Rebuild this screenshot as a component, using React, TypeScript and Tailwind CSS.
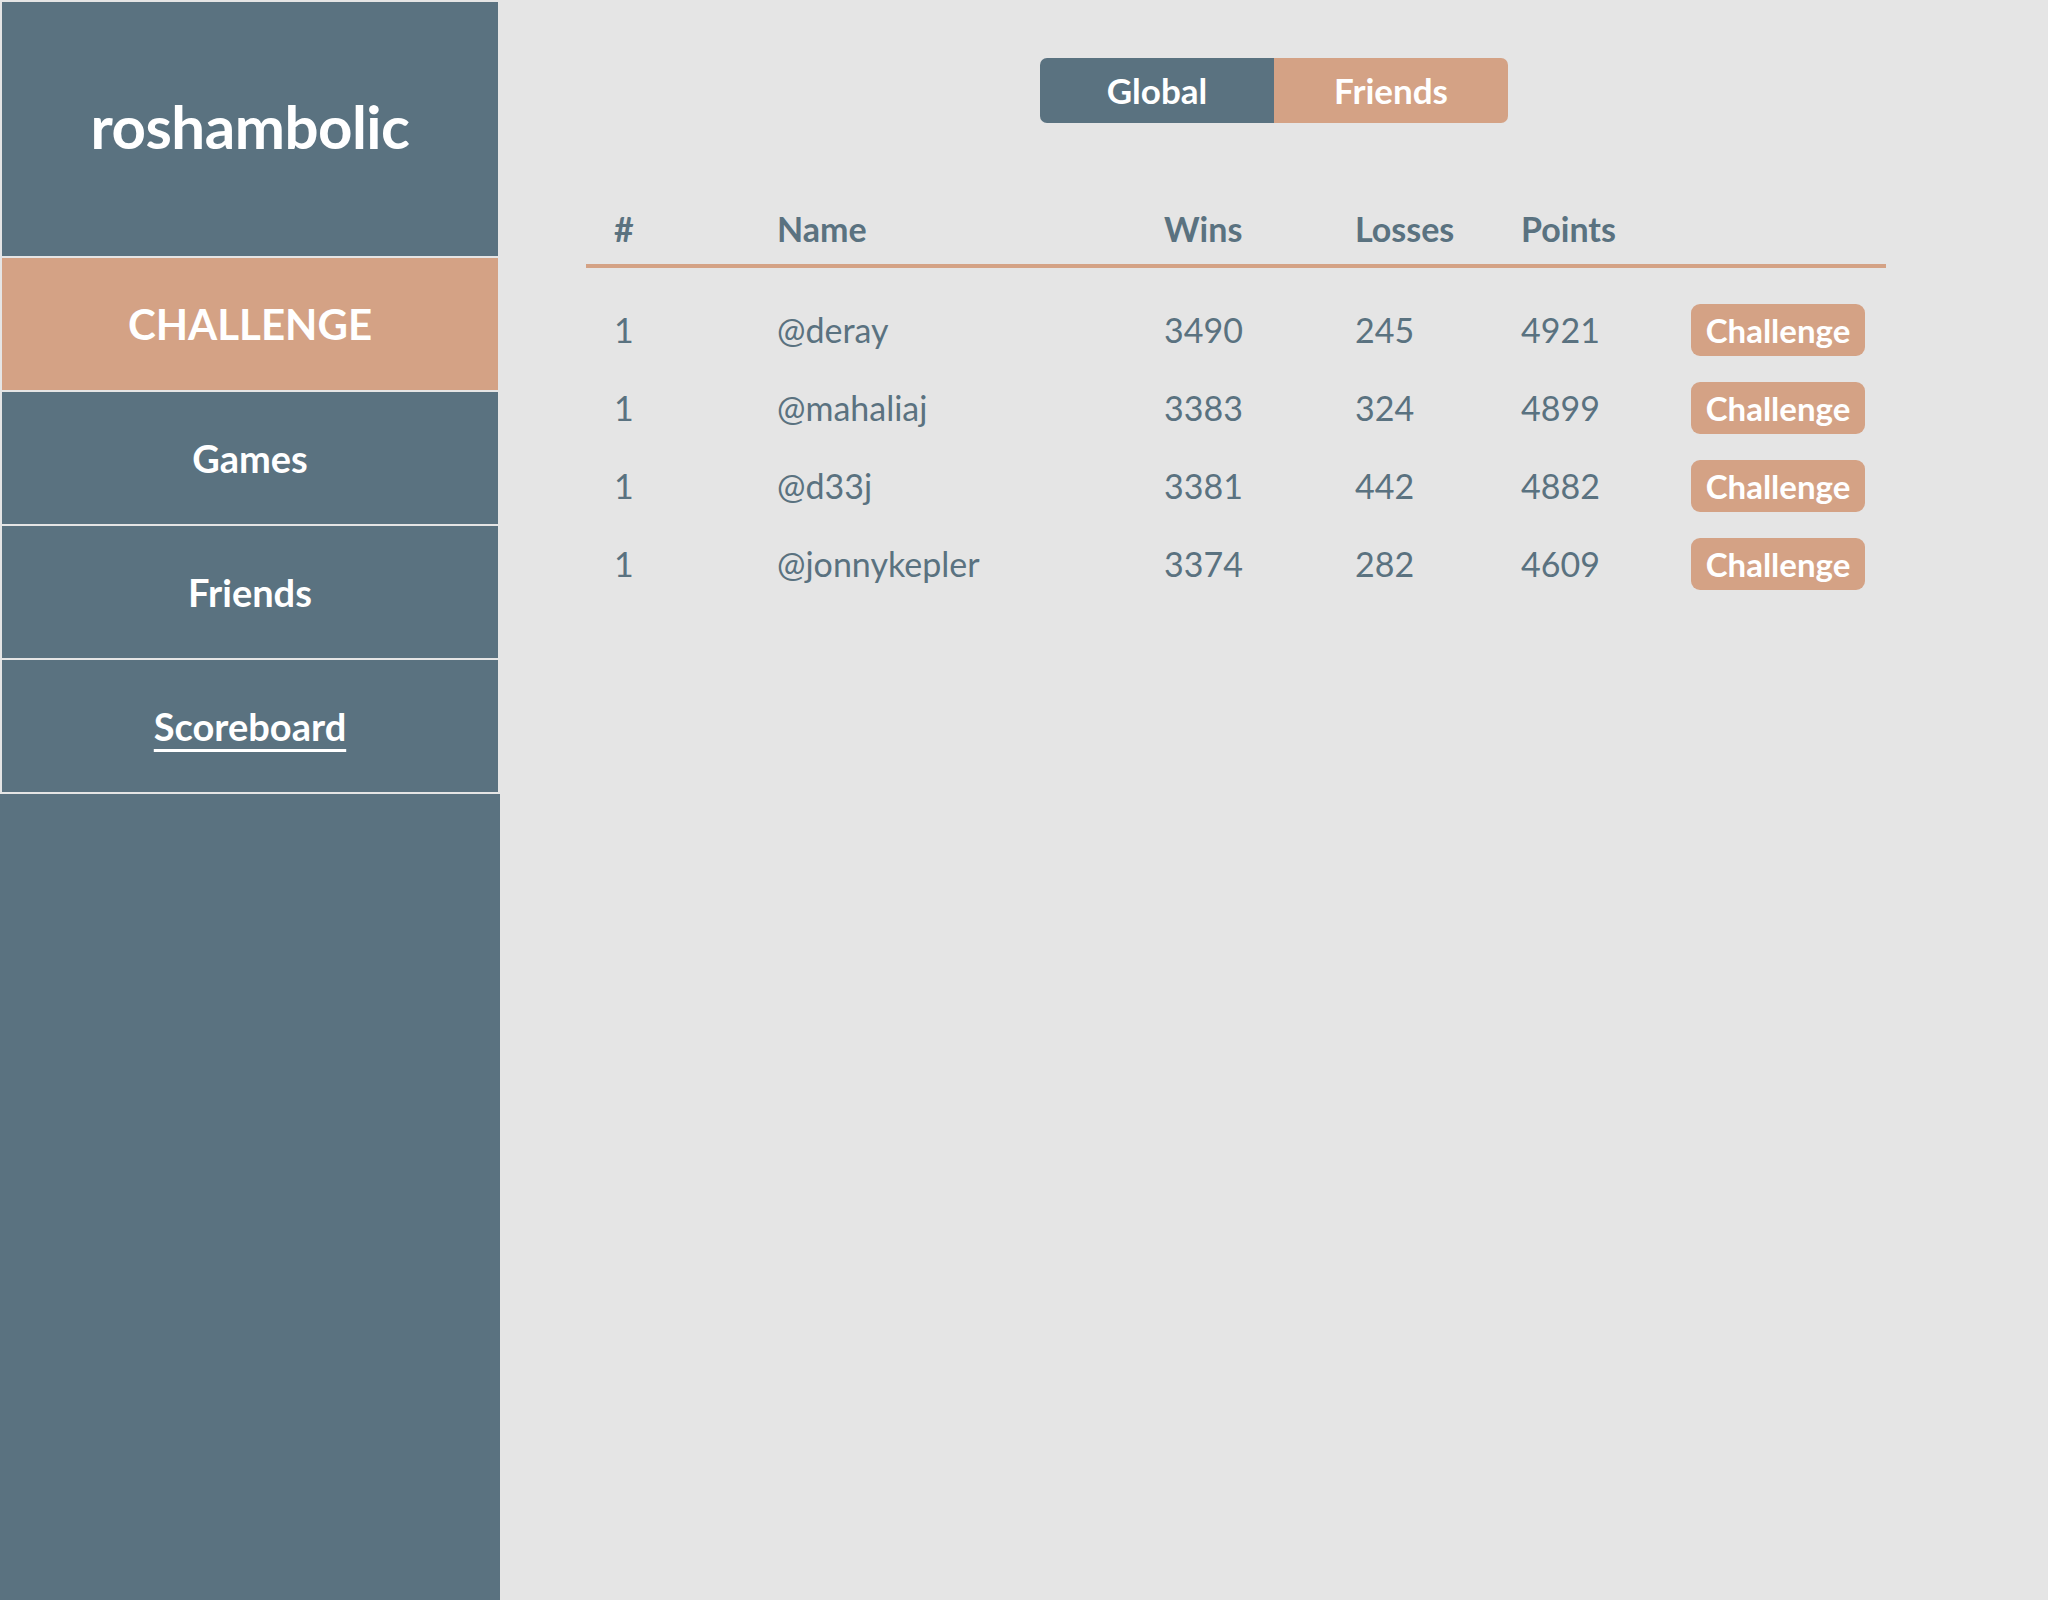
import React from "react";

const rows = [
  { rank: 1, name: "@deray", wins: 3490, losses: 245, points: 4921 },
  { rank: 1, name: "@mahaliaj", wins: 3383, losses: 324, points: 4899 },
  { rank: 1, name: "@d33j", wins: 3381, losses: 442, points: 4882 },
  { rank: 1, name: "@jonnykepler", wins: 3374, losses: 282, points: 4609 },
];

const grid = "grid grid-cols-[163px_387px_191px_166px_168px_1fr] pl-[28px]";

export default function App() {
  return (
    <div
      className="flex min-h-[1600px] w-full bg-[#e5e5e5] text-[#5a7280]"
      style={{ fontFamily: "Lato, 'Open Sans', sans-serif" }}
    >
      <aside className="flex w-[500px] shrink-0 flex-col">
        <div className="flex flex-col gap-[2px] bg-[#e5e5e5] p-[2px] pb-[2px]">
          <div className="flex h-[254px] items-center justify-center bg-[#5a7280] pb-[6px]">
            <span className="text-[60px] font-bold leading-none tracking-[-0.5px] text-white">
              roshambolic
            </span>
          </div>
          <div className="flex h-[132px] items-center justify-center bg-[#d4a285]">
            <span className="text-[42px] font-bold leading-none text-white">CHALLENGE</span>
          </div>
          <div className="flex h-[132px] items-center justify-center bg-[#5a7280]">
            <span className="text-[38px] font-bold leading-none text-white">Games</span>
          </div>
          <div className="flex h-[132px] items-center justify-center bg-[#5a7280]">
            <span className="text-[38px] font-bold leading-none text-white">Friends</span>
          </div>
          <div className="flex h-[132px] items-center justify-center bg-[#5a7280]">
            <span className="text-[38px] font-bold leading-none text-white underline decoration-[3px] underline-offset-[8px]">
              Scoreboard
            </span>
          </div>
        </div>
        <div className="flex-1 bg-[#5a7280]" />
      </aside>

      <main className="flex flex-1 flex-col">
        <div className="mt-[58px] flex justify-center">
          <div className="flex h-[65px] w-[468px] overflow-hidden rounded-[7px]">
            <button className="flex w-[234px] items-center justify-center bg-[#5a7280] text-[35px] font-bold text-white">
              Global
            </button>
            <button className="flex w-[234px] items-center justify-center bg-[#d4a285] text-[35px] font-bold text-white">
              Friends
            </button>
          </div>
        </div>

        <div className="ml-[86px] mt-[86px] w-[1300px]">
          <div className={`${grid} border-b-[4px] border-[#d4a285] pb-[15px] text-[34px] font-bold leading-[40px]`}>
            <div>#</div>
            <div>Name</div>
            <div>Wins</div>
            <div>Losses</div>
            <div>Points</div>
            <div />
          </div>
          <div className="mt-[23px]">
            {rows.map((r) => (
              <div
                key={r.name}
                className={`${grid} h-[78px] items-center text-[34px] font-normal leading-[40px]`}
              >
                <div>{r.rank}</div>
                <div>{r.name}</div>
                <div>{r.wins}</div>
                <div>{r.losses}</div>
                <div>{r.points}</div>
                <div className="ml-[2px]">
                  <button className="flex h-[52px] w-[174px] items-center justify-center rounded-[9px] bg-[#d4a285] text-[33px] font-bold text-white">
                    Challenge
                  </button>
                </div>
              </div>
            ))}
          </div>
        </div>
      </main>
    </div>
  );
}
